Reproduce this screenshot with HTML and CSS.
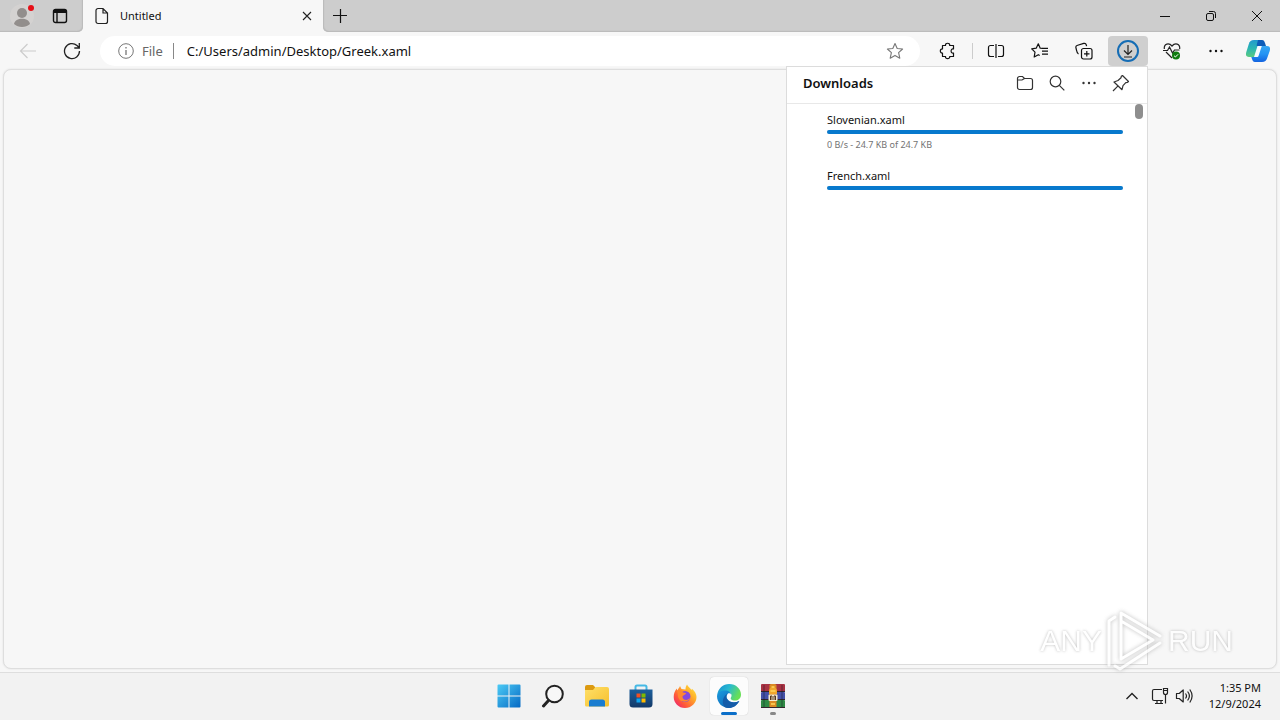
FILE: index.html
```html
<!DOCTYPE html>
<html lang="en">
<head>
    <meta charset="UTF-8">
    <meta name="viewport" content="width=device-width, initial-scale=1.0">
    <title>Untitled</title>
    <link rel="stylesheet" href="styles.css">
</head>
<body>
<div class="browser">
    <header class="tabs">
        <div class="tabs-left">
            <button class="profile" aria-label="Profile">
                <svg width="24" height="24" viewBox="0 0 24 24"><circle cx="12" cy="12" r="12" fill="#d4d2d1"/><circle cx="12" cy="9" r="5" fill="#928e8c"/><path d="M4 20c1-7 15-7 16 0-4 4-12 4-16 0z" fill="#928e8c"/></svg>
                <span class="dot"></span>
            </button>
            <button class="workspace" aria-label="Tab actions">
                <svg width="16" height="16" viewBox="0 0 16 16" fill="none" stroke="#111" stroke-width="1.4"><rect x="1.5" y="1.5" width="13" height="13" rx="2"/><path d="M2 3.4h12" stroke-width="3.2"/><path d="M5 4v10"/></svg>
            </button>
        </div>
        <div class="tab">
            <svg width="14" height="18" viewBox="0 0 14 18" fill="none" stroke="#222" stroke-width="1.2"><path d="M3 1.5h5l4.500 4.500v8.500a2 2 0 0 1-2 2H3a2 2 0 0 1-2-2v-11a2 2 0 0 1 2-2zM8 1.500V6h4.500"/></svg>
            <span class="tab-title">Untitled</span>
            <button class="tab-close" aria-label="Close tab">
                <svg width="10" height="10" viewBox="0 0 10 10" stroke="#222" stroke-width="1.1"><path d="M1 1l8 8M9 1l-8 8"/></svg>
            </button>
        </div>
        <div class="tabs-right">
            <button class="new-tab" aria-label="New tab">
                <svg width="14" height="14" viewBox="0 0 14 14" stroke="#111" stroke-width="1.2"><path d="M7.500 0v14M0 6.500h14"/></svg>
            </button>
            <div class="window-buttons">
                <button aria-label="Minimize"><svg width="10" height="10" viewBox="0 0 10 10" stroke="#111"><path d="M0 5.500h10"/></svg></button>
                <button aria-label="Restore"><svg width="10" height="10" viewBox="0 0 10 10" fill="none" stroke="#111"><rect x=".5" y="2.500" width="7" height="7" rx="1.500"/><path d="M3 .5h4.500a2 2 0 0 1 2 2V7"/></svg></button>
                <button aria-label="Close"><svg width="10" height="10" viewBox="0 0 10 10" stroke="#111"><path d="M0 0l10 10M10 0L0 10"/></svg></button>
            </div>
        </div>
    </header>

    <div class="toolbar">
        <button class="tool" aria-label="Back">
            <svg width="18" height="16" viewBox="0 0 18 16" fill="none" stroke="#ccc" stroke-width="1.2"><path d="M17 8H2M8.500 1L1.500 8l7 7"/></svg>
        </button>
        <button class="tool" aria-label="Refresh">
            <svg width="18" height="18" viewBox="0 0 18 18" fill="none" stroke="#222" stroke-width="1.300"><path d="M16.500 9A7.500 7.500 0 1 1 14 3.500L16 5.500M16.300 1v5h-5"/></svg>
        </button>
        <form class="address">
            <svg width="16" height="16" viewBox="0 0 16 16" fill="none" stroke="#767676"><circle cx="8" cy="8" r="7.300"/><path d="M8 7v5M8 4v1.500" stroke-width="1.300"/></svg>
            <label class="scheme" for="url">File</label>
            <input id="url" class="url" type="text" value="C:/Users/admin/Desktop/Greek.xaml">
            <button type="button" class="star" aria-label="Add to favorites">
                <svg width="18" height="18" viewBox="0 0 18 18" fill="none" stroke="#777" stroke-width="1.100" stroke-linejoin="round"><path d="M9 1.500l2.200 5 5.400.5-4 3.700 1.200 5.500L9 13.400l-4.800 2.800 1.200-5.500-4-3.700 5.400-.5z"/></svg>
            </button>
        </form>
        <button class="tool" aria-label="Extensions">
            <svg width="18" height="18" viewBox="0 0 18 18" fill="none" stroke="#111" stroke-width="1.200" stroke-linejoin="round"><path d="M3.500 3.500H6.500c-.5-3 4.700-3 4.200 0h3.800V7c-3.200-.9-3.200 4.900 0 4v3.500h-3.800c.5 2.900-4.700 2.900-4.200 0H3.500v-3.500c-2.900.5-2.900-4.500 0-4z"/></svg>
        </button>
        <span class="divider"></span>
        <button class="tool split" aria-label="Split screen">
            <svg width="18" height="18" viewBox="0 0 18 18" fill="none" stroke="#111" stroke-width="1.200"><path d="M7 3.500H3.500a2 2 0 0 0-2 2v7a2 2 0 0 0 2 2H7M11 3.500h3.500a2 2 0 0 1 2 2v7a2 2 0 0 1-2 2H11M9 2v14"/></svg>
        </button>
        <button class="tool" aria-label="Favorites">
            <svg width="18" height="18" viewBox="0 0 18 18" fill="none" stroke="#111" stroke-width="1.200" stroke-linejoin="round"><path d="M11.500 6.500l-2.300-.3L7.300 1.800 5.200 6.200l-4.500.6L4 10.100 3.200 15l4.100-2.300 1.400.8M11 9.200h6M11 6.300h6M11 12.200h6"/></svg>
        </button>
        <button class="tool" aria-label="Collections">
            <svg width="18" height="18" viewBox="0 0 18 18" fill="none" stroke="#111" stroke-width="1.200"><rect x="6.500" y="6.500" width="10.500" height="10.500" rx="2"/><path d="M11.800 9v5.500M9 11.800h5.500M3.500 12C1.500 11 1.800 9 1 6c-.5-1.500.4-2.400 1.700-2.800l6-1.800c2-.5 2.500.6 2.900 2.800"/></svg>
        </button>
        <button class="tool active" aria-label="Downloads">
            <svg width="24" height="24" viewBox="0 0 24 24" fill="none"><circle cx="12" cy="12" r="10" stroke="#156db5" stroke-width="2"/><path d="M12 6v9M8 11.500l4 4 4-4M8 18h8" stroke="#222" stroke-width="1.200"/></svg>
        </button>
        <button class="tool" aria-label="Browser essentials">
            <svg width="18" height="18" viewBox="0 0 18 18" fill="none" stroke="#222" stroke-width="1.200"><path d="M1.300 7C.7 1.500 6 .5 9 4c3-3.500 8.300-2.500 7.700 3M3 10l6 6M0 8.500h4.500L6.500 5l3 6 2-3h5"/><circle cx="13" cy="13.500" r="4" fill="#107c10" stroke="none"/><path d="M11 13.700l1.400 1.300 2.700-2.700" stroke="#fff" stroke-width="1"/></svg>
        </button>
        <button class="tool" aria-label="Settings and more">
            <svg width="14" height="4" viewBox="0 0 14 4" fill="#111"><circle cx="1.500" cy="2" r="1.200"/><circle cx="7" cy="2" r="1.200"/><circle cx="12.500" cy="2" r="1.200"/></svg>
        </button>
        <button class="tool copilot" aria-label="Copilot">
            <svg width="24" height="24" viewBox="0 0 24 24">
                <defs>
                    <linearGradient id="cp1" x1="0" y1="0" x2="0" y2="1"><stop offset="0" stop-color="#2299ce"/><stop offset=".5" stop-color="#2bb6b2"/><stop offset="1" stop-color="#5ccb80"/></linearGradient>
                    <linearGradient id="cp2" x1="0" y1="0" x2="0" y2="1"><stop offset="0" stop-color="#35a6f2"/><stop offset=".5" stop-color="#2494f4"/><stop offset="1" stop-color="#1363e0"/></linearGradient>
                </defs>
                <path d="M8 1h7L9.500 18H3c-3 0-3.500-2-2.700-5l2.500-8C3.700 2.500 5 1 8 1z" fill="url(#cp1)"/>
                <path d="M12 1h4c2 0 2.500 1.500 3 3l1 3h-8.500c-.8 0-1-.5-.8-1z" fill="#0d5cb8"/>
                <path d="M16 23H9c-2 0-2.500-1.500-3-3l-.7-2H11l3.500-11H21c3 0 3.500 2 2.700 5l-2.500 7c-.9 2.500-2.200 4-5.200 4z" fill="url(#cp2)"/>
                <path d="M11.500 7h4.300L12.500 17c-.2.700-.6 1-1.200 1H8z" fill="#f7fbff"/>
            </svg>
        </button>
    </div>

    <main class="page"></main>

    <section class="downloads">
        <div class="downloads-head">
            <h1>Downloads</h1>
            <button aria-label="Open downloads folder"><svg width="18" height="18" viewBox="0 0 18 18" fill="none" stroke="#333" stroke-width="1.200"><path d="M1.500 4.500a2 2 0 0 1 2-2h3L8.500 4.500h6a2 2 0 0 1 2 2v7a2 2 0 0 1-2 2h-11a2 2 0 0 1-2-2zM1.500 6h4.500L8.500 4.500"/></svg></button>
            <button aria-label="Search downloads"><svg width="18" height="18" viewBox="0 0 18 18" fill="none" stroke="#333" stroke-width="1.200"><circle cx="7.500" cy="7.500" r="5.300"/><path d="M11.300 11.300l5 5"/></svg></button>
            <button aria-label="More options"><svg width="14" height="4" viewBox="0 0 14 4" fill="#333"><circle cx="1.500" cy="2" r="1.200"/><circle cx="7" cy="2" r="1.200"/><circle cx="12.500" cy="2" r="1.200"/></svg></button>
            <button aria-label="Pin downloads"><svg width="18" height="18" viewBox="0 0 18 18" fill="none" stroke="#333" stroke-width="1.200" stroke-linejoin="round"><path d="M10.500 1.500l6 6-1.200 1-1.500.2-2.800 3-1 4-8-7.700 4-1.500 3-2.700.3-1.500zM5.800 12.200L1 17"/></svg></button>
        </div>
        <div class="downloads-list">
            <div class="item">
                <label class="name" for="file1">Slovenian.xaml</label>
                <progress id="file1" value="100" max="100"></progress>
                <p class="status">0 B/s - 24.7 KB of 24.7 KB</p>
            </div>
            <div class="item">
                <label class="name" for="file2">French.xaml</label>
                <progress id="file2" value="100" max="100"></progress>
            </div>
            <span class="thumb"></span>
        </div>
    </section>
</div>

<footer class="taskbar">
    <nav class="apps">
        <button aria-label="Start">
            <svg width="24" height="24" viewBox="0 0 24 24"><defs><linearGradient id="win" x1="0" y1="0" x2="1" y2="1"><stop offset="0" stop-color="#4ccbf5"/><stop offset="1" stop-color="#0669c4"/></linearGradient></defs><path d="M.5 1.500a1 1 0 0 1 1-1H11.500v11H.5zM12.500.5h10a1 1 0 0 1 1 1v10h-11zM.5 12.500h11v11h-10a1 1 0 0 1-1-1zM12.500 12.500h11v10a1 1 0 0 1-1 1h-10z" fill="url(#win)"/></svg>
        </button>
        <button aria-label="Search">
            <svg width="24" height="24" viewBox="0 0 24 24"><circle cx="13.500" cy="10" r="8.300" fill="#f7f7f7" stroke="#222" stroke-width="2"/><path d="M7.500 16.500L2.500 22" stroke="#222" stroke-width="3" stroke-linecap="round"/></svg>
        </button>
        <button aria-label="File Explorer">
            <svg width="24" height="24" viewBox="0 0 24 24"><defs><linearGradient id="fe" x1="0" y1="0" x2="1" y2="1"><stop offset="0" stop-color="#ffe069"/><stop offset="1" stop-color="#f6bf2c"/></linearGradient></defs><path d="M0 3a2 2 0 0 1 2-2h6l2 2v4H0z" fill="#dc9a10"/><path d="M0 6h8l2.500-3H22a2 2 0 0 1 2 2v16a1.500 1.500 0 0 1-1.500 1.500h-21A1.500 1.500 0 0 1 0 21z" fill="url(#fe)"/><path d="M4 22.500V18a2.500 2.500 0 0 1 2.500-2.500h11A2.500 2.500 0 0 1 20 18v4.500z" fill="#1a7dd0"/></svg>
        </button>
        <button aria-label="Microsoft Store">
            <svg width="24" height="24" viewBox="0 0 24 24"><defs><linearGradient id="ms" x1="0" y1="0" x2="0" y2="1"><stop offset="0" stop-color="#1c5f9c"/><stop offset="1" stop-color="#133968"/></linearGradient></defs><path d="M6.500 6V3a1.500 1.500 0 0 1 1.500-1.500h8A1.500 1.500 0 0 1 17.500 3v3" fill="none" stroke="#45b9e5" stroke-width="2"/><path d="M.5 5.500h23V20a3.500 3.500 0 0 1-3.500 3.500H4A3.500 3.500 0 0 1 .5 20z" fill="url(#ms)"/><path d="M7.500 9.500h4v4h-4z" fill="#f25022"/><path d="M12.500 9.500h4v4h-4z" fill="#7fba00"/><path d="M7.500 14.500h4v4h-4z" fill="#10a4ee"/><path d="M12.500 14.500h4v4h-4z" fill="#ffb900"/></svg>
        </button>
        <button aria-label="Firefox">
            <svg width="24" height="24" viewBox="0 0 24 24"><defs><linearGradient id="ff" x1="1" y1="0" x2="0" y2="1"><stop offset="0" stop-color="#fff14a"/><stop offset=".35" stop-color="#ffae28"/><stop offset=".7" stop-color="#ff563b"/><stop offset="1" stop-color="#e31587"/></linearGradient></defs><path d="M14 .5c1 2.500 3 3 4.500 5.500l.5-1.200c3 2.700 4.500 5.500 4.500 8.200C23.500 19 18.500 24 12 24S.7 19 .7 13c0-3.500 1-6 3-8.500l.5 2C5 5 6.500 3.500 7 2l1.500 3 4 .5C12.500 3.500 13 2 14 .5z" fill="url(#ff)"/><circle cx="12" cy="12.500" r="5.500" fill="#8548dc"/><path d="M4 7c3-1.500 5-.5 6 1.500l3 .5c0 2-3.500 2-3.500 4 .5 3.500 5.500 4 8 .5-1 5-11 6.500-12.500-1C4.700 10 5 8.500 4 7z" fill="#ff872f"/></svg>
        </button>
        <button class="running" aria-label="Microsoft Edge">
            <svg width="24" height="24" viewBox="0 0 24 24"><defs><linearGradient id="e1" x1="0" y1="0" x2="1" y2=".4"><stop offset="0" stop-color="#168bd0"/><stop offset=".5" stop-color="#28b9d1"/><stop offset="1" stop-color="#67df57"/></linearGradient><linearGradient id="e2" x1="0" y1="0" x2="1" y2="1"><stop offset="0" stop-color="#1b9be0"/><stop offset="1" stop-color="#0c58a8"/></linearGradient></defs><path d="M.2 11C1 4.500 6 0 12.200 0 19 0 24 5 24 10.500c0 4-3 6-6 6-3.500 0-5-1.500-4-3 1.500-2.500 0-5.500-3.500-5.500C6 8 2 10 .2 11z" fill="url(#e1)"/><path d="M0 12C.5 8.500 4 6.500 8 6.500c3.500 0 6 2 6.200 4.200C13.500 9.500 12 9 11 9.500 9.500 11 9.300 13 10 14.500c1.800 3.700 7 5 12.300 2.500C19.500 22 16 24 12 24 5.500 24 0 19 0 12z" fill="url(#e2)"/><path d="M8 23.300C4.500 20 5 13 10.500 9.500c-1.500 2-1.500 3.800-.5 5.500 2 4 7 4.600 12.300 2C18.500 23 13 25 8 23.300z" fill="#155ca8"/></svg>
        </button>
        <button class="idle" aria-label="WinRAR">
            <svg width="24" height="24" viewBox="0 0 24 24"><rect x="0" y="0" width="24" height="8" rx="1" fill="#a83242"/><rect x="0" y="8" width="24" height="8" rx="1" fill="#4450a8"/><rect x="0" y="16" width="24" height="8" rx="1" fill="#2f8a45"/><path d="M0 7.500h24M0 15.500h24M0 23.500h24" stroke="#33252c"/><path d="M3 1v22M21 1v22" stroke="#151522" stroke-opacity=".45"/><path d="M8.500 1c2-2 5-2 7 0v22h-7z" fill="#db8a22"/><path d="M8 7c0-5 8-5 8 0v3H8z" fill="#f0a62c"/><path d="M10.500 3h3M9.500 7h5M10 20h4" stroke="#ffd75b" stroke-width="1.500"/><rect x="7.500" y="10.500" width="9" height="6.500" rx="1" fill="#f4ead1"/><path d="M9.500 16v-4h1.500v4M13 16v-4h1.500v4" fill="none" stroke="#52351b"/></svg>
        </button>
    </nav>
    <div class="tray">
        <button class="chevron" aria-label="Show hidden icons"><svg width="12" height="8" viewBox="0 0 12 8" fill="none" stroke="#222" stroke-width="1.400"><path d="M.5 7L6 1.500 11.500 7"/></svg></button>
        <button class="quick" aria-label="Network and volume">
            <svg width="18" height="18" viewBox="0 0 18 18" fill="none" stroke="#222" stroke-width="1.200"><path d="M11 2.500H3A1.500 1.500 0 0 0 1.500 4v8A1.500 1.500 0 0 0 3 13.500h9M4 16.500h8M6 14v2.500M10 14v2.500M12.500 1.500h4v4a2 2 0 0 1-4 0zM14.500 7.500v9M13 3.500h3"/></svg>
            <svg width="18" height="18" viewBox="0 0 18 18" fill="none" stroke="#222" stroke-width="1.200" stroke-linejoin="round"><path d="M1.500 6.500h2.700l4-3.500v12l-4-3.500H1.500zM10.500 6.500q2 2.500 0 5M12.600 4.500q3.600 4.500 0 9M14.800 2.500q4.600 6.500 0 13"/></svg>
        </button>
        <button class="clock"><span>1:35 PM</span><span>12/9/2024</span></button>
    </div>
</footer>

<div class="watermark">
    <span>ANY</span>
    <svg width="58" height="64" viewBox="0 0 58 64" fill="none" stroke-linejoin="round" stroke-linecap="round">
        <path d="M3 56V12l6-4M15 50V4l39 23M15 12l32 19-32 19M54 34L14 60l-5-3" stroke="#fff" stroke-width="3"/>
    </svg>
    <span>RUN</span>
</div>
</body>
</html>
```
FILE: styles.css
```css
*{
    margin: 0;
    padding: 0;
    box-sizing: border-box;
}
body{
    display: flex;
    flex-direction: column;
    height: 100vh;
    overflow: hidden;
    position: relative;
    background: #f7f7f7;
    color: #111;
    font: 12px/16px "Noto Sans", "Open Sans", sans-serif;
}
button,input{
    border: 0;
    background: none;
    color: inherit;
    font: inherit;
}
button{
    display: flex;
    align-items: center;
    justify-content: center;
}
svg{
    display: block;
    flex: none;
}
.browser{
    flex: 1;
    display: flex;
    flex-direction: column;
    position: relative;
}

/* tab strip */
.tabs{
    display: flex;
    height: 32px;
}
.tabs-left{
    display: flex;
    width: 83px;
    padding-left: 10px;
    gap: 18px;
    background: #cdcdcd;
    border-bottom-right-radius: 5px;
    box-shadow: inset -1px -1px 1px #bbb;
}
.profile{
    position: relative;
    width: 24px;
}
.dot{
    position: absolute;
    top: 5px;
    right: 0;
    width: 6px;
    height: 6px;
    border-radius: 50%;
    background: #e60f17;
}
.tab{
    display: flex;
    align-items: center;
    width: 240px;
    padding: 0 10px 0 12px;
}
.tab-title{
    flex: 1;
    margin-left: 11px;
    font-size: 11px;
}
.tab-close{
    width: 12px;
    height: 20px;
}
.tabs-right{
    flex: 1;
    display: flex;
    justify-content: space-between;
    background: #cdcdcd;
    border-bottom-left-radius: 5px;
    box-shadow: inset 1px -1px 1px #bbb;
}
.new-tab{
    width: 34px;
}
.window-buttons{
    display: flex;
}
.window-buttons button{
    width: 46px;
}

/* toolbar */
.toolbar{
    display: flex;
    align-items: center;
    height: 37px;
    padding: 0 2px 0 8px;
    gap: 4px;
}
.tool{
    width: 40px;
    height: 30px;
    border-radius: 4px;
}
.tool.active{
    background: #cfcfcf;
}
.address{
    flex: 1;
    display: flex;
    align-items: center;
    height: 30px;
    margin: 0 4px;
    padding: 0 16px 0 18px;
    border-radius: 15px;
    background: #fff;
    font-size: 13px;
}
.scheme{
    margin-left: 8px;
    padding-right: 10px;
    border-right: 1px solid #888;
    color: #666;
}
.url{
    flex: 1;
    padding-left: 13px;
    outline: none;
}
.divider{
    width: 1px;
    height: 16px;
    background: #ccc;
}
.split{
    margin-left: -1px;
}
.copilot{
    margin-left: -2px;
}

.page{
    flex: 1;
    margin: 0 3px 3px;
    border: 1px solid #dedede;
    border-radius: 8px;
    background: #f7f7f7;
    box-shadow: 0 0 2px #ddd;
}

/* downloads flyout */
.downloads{
    position: absolute;
    top: 66px;
    right: 132px;
    bottom: 7px;
    width: 362px;
    display: flex;
    flex-direction: column;
    border: 1px solid #dcdcdc;
    background: #fff;
}
.downloads-head{
    display: flex;
    align-items: center;
    height: 37px;
    padding: 0 10px 4px 16px;
    border-bottom: 1px solid #e8e8e8;
}
.downloads-head h1{
    flex: 1;
    font-size: 13px;
    font-weight: 600;
}
.downloads-head button{
    width: 32px;
    height: 32px;
}
.downloads-list{
    flex: 1;
    position: relative;
    padding: 8px 24px 0 40px;
}
.item{
    height: 56px;
}
.name{
    display: block;
    font-size: 11px;
}
progress{
    display: block;
    width: 100%;
    height: 4px;
    margin: 2px 0 3px;
    appearance: none;
}
progress::-webkit-progress-bar{
    border-radius: 2px;
    background: #ddd;
}
progress::-webkit-progress-value{
    border-radius: 2px;
    background: #0779cd;
}
.status{
    color: #737373;
    font-size: 9px;
}
.thumb{
    position: absolute;
    top: 0;
    right: 4px;
    width: 8px;
    height: 15px;
    border-radius: 4px;
    background: #8e8e8e;
}

/* taskbar */
.taskbar{
    display: grid;
    grid-template-columns: 1fr auto 1fr;
    align-items: center;
    height: 48px;
    padding-bottom: 2px;
    border-top: 1px solid #dedede;
    background: #f2f2f2;
}
.apps{
    grid-column: 2;
    display: flex;
    gap: 6px;
    padding-left: 1px;
}
.apps button{
    position: relative;
    width: 38px;
    height: 38px;
    border-radius: 4px;
}
.apps .running{
    background: #fcfcfc;
    box-shadow: 0 0 1px #bbb;
}
.running::after,.idle::after{
    content: "";
    position: absolute;
    bottom: 0;
    width: 16px;
    height: 3px;
    border-radius: 2px;
    background: #0b6fc9;
}
.idle::after{
    width: 6px;
    background: #888;
}
.tray{
    justify-self: end;
    display: flex;
    align-items: center;
    padding-right: 19px;
}
.chevron{
    width: 24px;
    height: 40px;
}
.quick{
    gap: 6px;
    width: 56px;
    height: 40px;
}
.clock{
    flex-direction: column;
    align-items: flex-end;
    min-width: 61px;
    font-size: 11px;
}

.watermark{
    position: absolute;
    right: 47px;
    bottom: 47px;
    display: flex;
    align-items: center;
    gap: 4px;
    color: #fff;
    font: 30px/48px "Liberation Sans", sans-serif;
    text-shadow: 0 0 3px #aaa;
    opacity: .8;
    pointer-events: none;
}
.watermark svg{
    filter: drop-shadow(0 0 2px #aaa);
}
```
